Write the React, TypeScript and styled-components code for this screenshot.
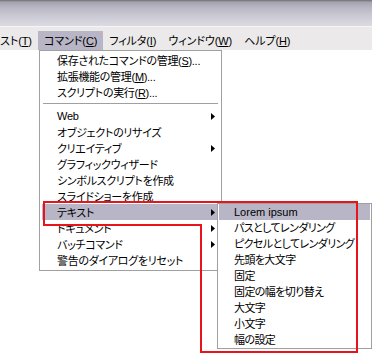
import React from "react";
import styled, { createGlobalStyle } from "styled-components";

const GlobalStyle = createGlobalStyle`
  html, body {
    margin: 0;
    padding: 0;
    background: #fff;
  }
  body {
    font-family: "Liberation Sans", "Noto Sans CJK JP", sans-serif;
    font-size: 11px;
    color: #000;
    font-feature-settings: "palt";
  }
`;

const Screen = styled.div`
  position: relative;
  width: 372px;
  height: 355px;
  overflow: hidden;
  background: #fff;
`;

const TitleBar = styled.div`
  height: 26px;
  background: linear-gradient(
    to bottom,
    #6f6e76 0px,
    #a3a2ad 2px,
    #b6b5c2 7px,
    #cfced8 18px,
    #dcdbe2 26px
  );
`;

const MenuBar = styled.div`
  display: flex;
  align-items: stretch;
  height: 24px;
  padding-top: 4px;
  box-sizing: border-box;
  background: #ebe9e9;
  border-top: 1px solid #f6f5f6;
`;

const BarItem = styled.div<{ $active?: boolean }>`
  padding: 0 6px;
  line-height: 20px;
  white-space: nowrap;
  letter-spacing: -0.1px;
  background: ${(p) => (p.$active ? "#b8b6c6" : "transparent")};

  &:first-child {
    margin-left: -6px;
  }
`;

const Key = styled.span`
  text-decoration: underline;
  text-underline-offset: 1px;
`;

const Dropdown = styled.div`
  position: absolute;
  left: 39px;
  top: 50px;
  width: 183px;
  box-sizing: border-box;
  padding: 1px 0 2px;
  background: #fff;
  border: 1px solid #a0a0a0;
`;

const Item = styled.div<{ $active?: boolean }>`
  position: relative;
  display: flex;
  align-items: center;
  height: 16px;
  margin: 0 2px;
  padding: 0 4px 0 15px;
  white-space: nowrap;
  letter-spacing: -0.3px;
  background: ${(p) => (p.$active ? "#b8b6c6" : "transparent")};
`;

const Label = styled.span`
  flex: 1;
`;

const Separator = styled.div`
  height: 1px;
  margin: 3px 3px 4px;
  background: #a0a0a0;
`;

const SubMenu = styled.div`
  position: absolute;
  left: 175px;
  top: -1px;
  width: 155px;
  box-sizing: border-box;
  background: #fff;
  border: 1px solid #a0a0a0;
  letter-spacing: 0;
  z-index: 2;
`;

const SubItem = styled.div<{ $active?: boolean; $latin?: boolean }>`
  height: 16px;
  line-height: 16px;
  margin: 0 1px;
  padding-left: 15px;
  white-space: nowrap;
  letter-spacing: ${(p) => (p.$latin ? "0" : "-0.6px")};
  background: ${(p) => (p.$active ? "#b8b6c6" : "transparent")};
`;

const Annotation = styled.svg`
  position: absolute;
  left: 0;
  top: 0;
  z-index: 3;
  pointer-events: none;
`;

const Arrow = () => (
  <svg width="4" height="7" viewBox="0 0 4 7">
    <polygon points="0,0 4,3.5 0,7" fill="#000" />
  </svg>
);

type Entry =
  | { kind: "sep" }
  | { kind: "item"; label: React.ReactNode; sub?: boolean; active?: boolean };

const entries: Entry[] = [
  { kind: "item", label: <>保存されたコマンドの管理(<Key>S</Key>)...</> },
  { kind: "item", label: <>拡張機能の管理(<Key>M</Key>)...</> },
  { kind: "item", label: <>スクリプトの実行(<Key>R</Key>)...</> },
  { kind: "sep" },
  { kind: "item", label: "Web", sub: true },
  { kind: "item", label: "オブジェクトのリサイズ" },
  { kind: "item", label: "クリエイティブ", sub: true },
  { kind: "item", label: "グラフィックウィザード" },
  { kind: "item", label: "シンボルスクリプトを作成" },
  { kind: "item", label: "スライドショーを作成" },
  { kind: "item", label: "テキスト", sub: true, active: true },
  { kind: "item", label: "ドキュメント", sub: true },
  { kind: "item", label: "バッチコマンド", sub: true },
  { kind: "item", label: "警告のダイアログをリセット" },
];

const textItems = [
  "Lorem ipsum",
  "パスとしてレンダリング",
  "ピクセルとしてレンダリング",
  "先頭を大文字",
  "固定",
  "固定の幅を切り替え",
  "大文字",
  "小文字",
  "幅の設定",
];

export default function App() {
  return (
    <Screen>
      <GlobalStyle />
      <TitleBar />
      <MenuBar>
        <BarItem>スト(<Key>T</Key>)</BarItem>
        <BarItem $active>コマンド(<Key>C</Key>)</BarItem>
        <BarItem>フィルタ(<Key>I</Key>)</BarItem>
        <BarItem>ウィンドウ(<Key>W</Key>)</BarItem>
        <BarItem>ヘルプ(<Key>H</Key>)</BarItem>
      </MenuBar>

      <Dropdown>
        {entries.map((e, i) =>
          e.kind === "sep" ? (
            <Separator key={i} />
          ) : (
            <Item key={i} $active={e.active}>
              <Label>{e.label}</Label>
              {e.sub && <Arrow />}
              {e.active && (
                <SubMenu>
                  {textItems.map((t, j) => (
                    <SubItem key={t} $active={j === 0} $latin={j === 0}>
                      {t}
                    </SubItem>
                  ))}
                </SubMenu>
              )}
            </Item>
          )
        )}
      </Dropdown>

      <Annotation width="372" height="355">
        <path
          d="M44 202 H357 V352 H201 V225 H44 Z"
          fill="none"
          stroke="#e8141c"
          strokeWidth="2"
        />
      </Annotation>
    </Screen>
  );
}
